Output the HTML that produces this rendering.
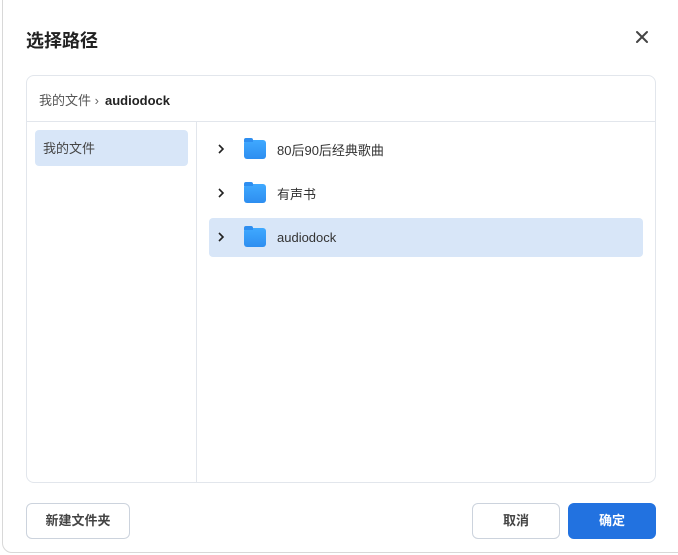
<!DOCTYPE html><html><head><meta charset="utf-8"><style>
*{box-sizing:border-box;margin:0;padding:0}
body{width:678px;height:555px;background:#fff;font-family:"Liberation Sans","Noto Sans CJK SC",sans-serif;position:relative;overflow:hidden;color:#333}
.dlg{position:absolute;left:2px;top:-10px;width:690px;height:563px;border:1px solid #d8d8d8;border-radius:10px;background:#fff}
.t{position:absolute;left:26px;top:27px;font-size:18px;font-weight:bold;color:#222}
.x{position:absolute;left:633px;top:28px}
.panel{position:absolute;left:26px;top:75px;width:630px;height:408px;border:1px solid #e2e6ec;border-radius:8px}
.bc{position:absolute;left:12px;top:14px;font-size:13px;color:#555}
.bc b{color:#222;margin-left:6px}
.hl{position:absolute;left:0;top:45px;width:100%;border-top:1px solid #e2e6ec}
.vl{position:absolute;left:169px;top:46px;bottom:0;border-left:1px solid #e2e6ec}
.side{position:absolute;left:8px;top:54px;width:153px;height:36px;background:#d8e6f8;border-radius:4px;font-size:13px;color:#444;padding:8px 8px}
.row{position:absolute;left:182px;width:434px;height:39px;border-radius:4px;font-size:13px;color:#333}
.row.sel{background:#d8e6f8}
.row svg{position:absolute;left:8px;top:14px}
.f{position:absolute;left:35px;top:10px;width:22px;height:19px;border-radius:3px;background:linear-gradient(#3fa9ff,#2e8ef0)}
.f:before{content:"";position:absolute;left:0;top:-2px;width:9px;height:4px;background:#2e8ef0;border-radius:2px 2px 0 0}
.row span{position:absolute;left:68px;top:10px}
.row.sel span{top:12px}
.btn{position:absolute;top:503px;height:36px;border:1px solid #ccd3dd;border-radius:6px;font-size:13px;font-weight:bold;color:#444;text-align:center;line-height:34px;background:#fff}
</style></head><body>
<div class="dlg"></div>
<div class="t">选择路径</div>
<svg class="x" width="18" height="18" viewBox="0 0 18 18"><path d="M4 4L14 14M14 4L4 14" stroke="#444" stroke-width="2" stroke-linecap="round"/></svg>
<div class="panel">
<div class="bc">我的文件 <span style="color:#666">›</span><b>audiodock</b></div>
<div class="hl"></div><div class="vl"></div>
<div class="side">我的文件</div>
<div class="row" style="top:54px"><svg width="8" height="10"><path d="M2 1L6 5L2 9" stroke="#222" stroke-width="1.6" fill="none"/></svg><div class="f"></div><span>80后90后经典歌曲</span></div>
<div class="row" style="top:98px"><svg width="8" height="10"><path d="M2 1L6 5L2 9" stroke="#222" stroke-width="1.6" fill="none"/></svg><div class="f"></div><span>有声书</span></div>
<div class="row sel" style="top:142px"><svg width="8" height="10"><path d="M2 1L6 5L2 9" stroke="#222" stroke-width="1.6" fill="none"/></svg><div class="f"></div><span>audiodock</span></div>
</div>
<div class="btn" style="left:26px;width:104px">新建文件夹</div>
<div class="btn" style="left:472px;width:88px">取消</div>
<div class="btn" style="left:568px;width:88px;background:#2272e0;border-color:#2272e0;color:#fff">确定</div>
</body></html>
